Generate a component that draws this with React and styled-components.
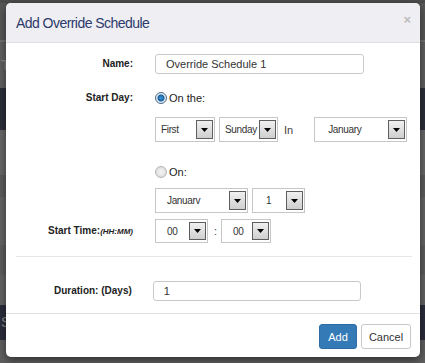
import React from "react";
import styled, { createGlobalStyle } from "styled-components";

const GlobalStyle = createGlobalStyle`
  html, body {
    margin: 0;
    padding: 0;
    width: 425px;
    height: 363px;
    overflow: hidden;
    font-family: "Liberation Sans", Arial, sans-serif;
  }
`;

const Page = styled.div`
  position: relative;
  width: 425px;
  height: 363px;
  display: flex;
  flex-direction: column;
`;

const Band = styled.div`
  height: ${(p) => p.h}px;
  background: ${(p) => p.bg};
  color: #8a8a8a;
  font-size: 14px;
  line-height: ${(p) => p.h}px;
  padding-left: 1px;
  overflow: hidden;
`;

const Dialog = styled.div`
  position: absolute;
  top: 3px;
  left: 6px;
  width: 414px;
  height: 354px;
  background: #fff;
  border-radius: 5px;
  box-shadow: 0 3px 9px rgba(0, 0, 0, 0.5);
  display: flex;
  flex-direction: column;
  overflow: hidden;
`;

const Header = styled.div`
  height: 39px;
  border-bottom: 1px solid #dedede;
  background: #efeff3;
  display: flex;
  align-items: center;
  justify-content: space-between;
  padding: 0 9px 0 10px;
`;

const Title = styled.h4`
  margin: 0;
  font-size: 14px;
  font-weight: normal;
  color: #2d3a6b;
  letter-spacing: -0.55px;
`;

const Close = styled.span`
  font-size: 13px;
  font-weight: bold;
  color: #bcbcbc;
  margin-top: -6px;
`;

const Body = styled.div`
  padding-top: 11px;
  display: grid;
  grid-template-columns: 127px 1fr;
  column-gap: 22px;
  align-items: start;
`;

const Label = styled.div`
  font-size: 10px;
  font-weight: bold;
  color: #222;
  text-align: right;
  height: ${(p) => p.h || 20}px;
  line-height: ${(p) => p.h || 20}px;
  margin-top: ${(p) => p.mt || 0}px;
`;

const Hint = styled.span`
  font-size: 8px;
  font-style: italic;
`;

const Field = styled.div`
  margin-top: ${(p) => p.mt || 0}px;
  display: flex;
  flex-direction: column;
`;

const TextInput = styled.div`
  box-sizing: border-box;
  width: ${(p) => p.w}px;
  height: 20px;
  border: 1px solid #c9c9c9;
  border-radius: 3px;
  padding-left: ${(p) => p.pl || 10}px;
  font-size: 11px;
  line-height: 18px;
  color: #333;
`;

const RadioRow = styled.label`
  display: flex;
  align-items: center;
  height: 12px;
  font-size: 11px;
  color: #222;
  margin-top: ${(p) => p.mt || 0}px;
`;

const Radio = styled.span`
  box-sizing: border-box;
  width: 12px;
  height: 12px;
  border-radius: 50%;
  margin-right: 2px;
  border: 1px solid ${(p) => (p.checked ? "#4a6a8a" : "#b4b4b4")};
  background: ${(p) =>
    p.checked
      ? "radial-gradient(circle, #3aa0e8 0, #1a5f9a 3px, #dfe8f0 4px, #f4f4f4 6px)"
      : "radial-gradient(circle, #f4f4f4 0, #dcdcdc 6px)"};
`;

const SelectRow = styled.div`
  display: flex;
  align-items: center;
  margin-top: ${(p) => p.mt || 0}px;
`;

const SelectBox = styled.div`
  box-sizing: border-box;
  width: ${(p) => p.w}px;
  height: ${(p) => p.h || 25}px;
  border: 1px solid #c6c6c6;
  background: #fff;
  display: flex;
  align-items: center;
  padding: 2px 1px 2px ${(p) => p.pl || 5}px;
  margin-right: ${(p) => p.mr || 0}px;
  font-size: 10px;
  letter-spacing: -0.35px;
  color: #333;
`;

const SelectText = styled.span`
  flex: 1;
  overflow: hidden;
  white-space: nowrap;
`;

const ArrowButton = styled.span`
  box-sizing: border-box;
  flex: none;
  width: 17px;
  align-self: stretch;
  border: 1px solid #5e5e5e;
  background: linear-gradient(#f0f0f0, #cfcfcf);
  display: flex;
  align-items: center;
  justify-content: center;
`;

const Inline = styled.span`
  font-size: 11px;
  color: #444;
  margin-right: ${(p) => p.mr || 0}px;
`;

const Divider = styled.div`
  grid-column: 1 / -1;
  height: 1px;
  background: #e6e6e6;
  margin: 13px 8px 0 10px;
`;

const DurationRow = styled.div`
  grid-column: 1 / -1;
  display: flex;
  align-items: center;
  margin-top: 24px;
  padding-left: 48px;
  gap: 21px;
`;

const Footer = styled.div`
  margin-top: 12px;
  border-top: 1px solid #e3e3e3;
  padding: 10px 9px 0 0;
  display: flex;
  justify-content: flex-end;
  gap: 4px;
`;

const Button = styled.button`
  box-sizing: border-box;
  height: 25px;
  width: ${(p) => p.w}px;
  padding: 0;
  border-radius: 3px;
  font-family: inherit;
  font-size: 11px;
  border: 1px solid ${(p) => (p.primary ? "#2e6da4" : "#c8c8c8")};
  background: ${(p) => (p.primary ? "#337ab7" : "#fff")};
  color: ${(p) => (p.primary ? "#fff" : "#333")};
`;

const Select = ({ value, w, pl, mr, h }) => (
  <SelectBox w={w} pl={pl} mr={mr} h={h}>
    <SelectText>{value}</SelectText>
    <ArrowButton>
      <svg width="7" height="4" viewBox="0 0 7 4">
        <path d="M0 0h7L3.5 4z" fill="#000" />
      </svg>
    </ArrowButton>
  </SelectBox>
);

const bands = [
  [3, "#4c4c4c"],
  [37, "#575757"],
  [2, "#707070"],
  [46, "#606060", "T"],
  [42, "#2c2f3a"],
  [45, "#676767"],
  [22, "#5c5c5c"],
  [48, "#646464"],
  [30, "#5d5d5d"],
  [30, "#636363"],
  [35, "#2b2d3c", "S"],
  [23, "#5f5f5f"],
];

const App = () => (
  <>
    <GlobalStyle />
    <Page>
      {bands.map(([h, bg, t], i) => (
        <Band key={i} h={h} bg={bg}>
          {t}
        </Band>
      ))}
      <Dialog>
        <Header>
          <Title>Add Override Schedule</Title>
          <Close>×</Close>
        </Header>
        <Body>
          <Label>Name:</Label>
          <Field>
            <TextInput w={209}>Override Schedule 1</TextInput>
          </Field>

          <Label mt={18} h={12}>Start Day:</Label>
          <Field mt={18}>
            <RadioRow>
              <Radio checked />
              On the:
            </RadioRow>
            <SelectRow mt={13}>
              <Select value="First" w={60} mr={4} />
              <Select value="Sunday" w={59} mr={6} />
              <Inline mr={21}>In</Inline>
              <Select value="January" w={93} pl={13} />
            </SelectRow>
            <RadioRow mt={24}>
              <Radio />
              On:
            </RadioRow>
            <SelectRow mt={10}>
              <Select value="Januarv" w={93} pl={11} mr={4} />
              <Select value="1" w={53} pl={13} />
            </SelectRow>
          </Field>

          <Label mt={6} h={24}>
            Start Time:<Hint>(HH:MM)</Hint>
          </Label>
          <Field mt={6}>
            <SelectRow>
              <Select value="00" w={53} pl={11} h={24} mr={6} />
              <Inline mr={4}>:</Inline>
              <Select value="00" w={50} pl={11} h={24} />
            </SelectRow>
          </Field>

          <Divider />

          <DurationRow>
            <Label>Duration: (Days)</Label>
            <TextInput w={208} pl={10}>1</TextInput>
          </DurationRow>
        </Body>
        <Footer>
          <Button primary w={38}>Add</Button>
          <Button w={50}>Cancel</Button>
        </Footer>
      </Dialog>
    </Page>
  </>
);

export default App;
